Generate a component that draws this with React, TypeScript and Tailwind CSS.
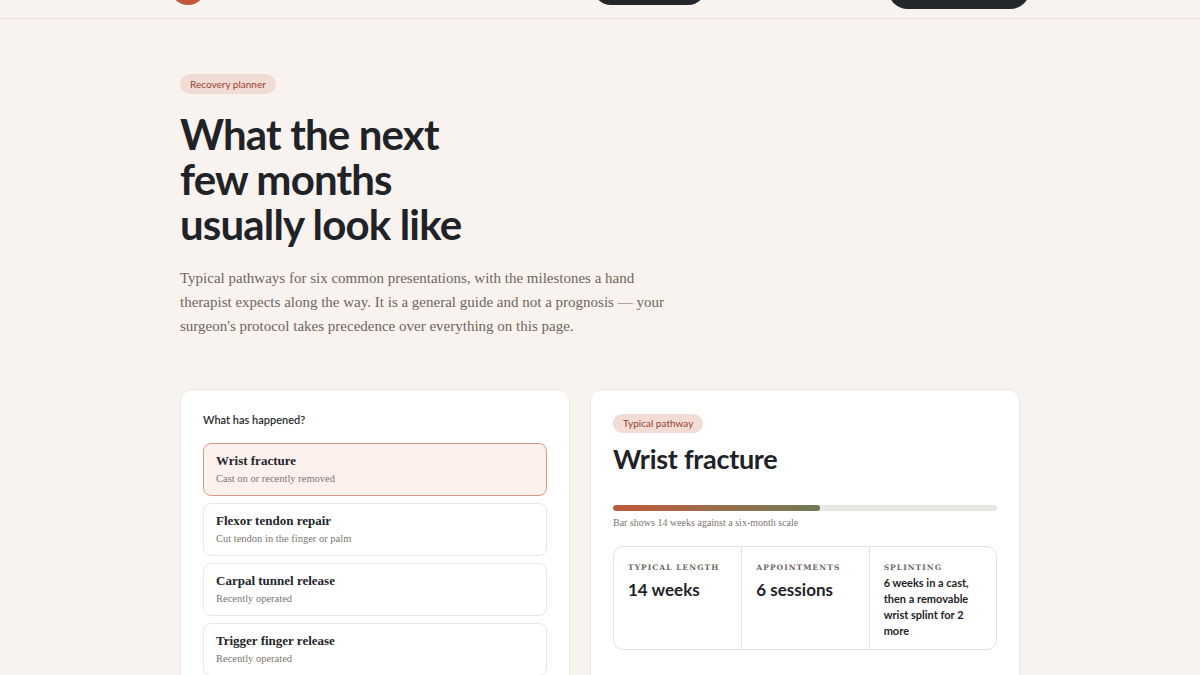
const OPTIONS = [
  { title: "Wrist fracture", sub: "Cast on or recently removed" },
  { title: "Flexor tendon repair", sub: "Cut tendon in the finger or palm" },
  { title: "Carpal tunnel release", sub: "Recently operated" },
  { title: "Trigger finger release", sub: "Recently operated" },
  { title: "Mallet finger", sub: "Splinted, not operated" },
  { title: "Thumb base arthritis", sub: "Joint replacement or fusion" },
];

const MILESTONES = [
  { week: "Week 1", text: "Swelling control and finger movement while the cast is on" },
  { week: "Week 6", text: "Cast removed, splint fitted, gentle wrist movement begins" },
  { week: "Week 10", text: "Strengthening and return to light daily tasks" },
];

const sans = "font-['Lato',sans-serif]";
const serif = "font-['Liberation_Serif',serif]";
const label = "font-['DejaVu_Serif',serif]";

export default function App() {
  const selected = 0;
  const weeks = 14;

  return (
    <div className="min-h-screen bg-[#f8f3ee] text-[#1f2328] overflow-hidden">
      <div className="-mt-[45px]">
        {/* Header */}
        <header className="h-16 border-b border-[#e6dfd8]">
          <div className="mx-auto w-[860px] h-full flex items-center">
            <div className="w-[423px] flex items-center gap-2.5">
              <div className="w-9 h-9 rounded-full bg-[#c4563a]" />
              <div className="leading-tight">
                <p className={`${sans} text-[14px] font-bold`}>Hand Therapy Cambridge</p>
                <p className={`${serif} text-[11px] text-[#7a716b]`}>
                  Cambridge · HCPC registered
                </p>
              </div>
            </div>
            <a className={`${sans} w-[113px] h-9 rounded-full bg-[#23262b] text-white text-[12px] font-semibold flex items-center justify-center`}>
              Planner
            </a>
            <nav className={`${sans} flex-1 flex items-center gap-6 pl-6 text-[12px] text-[#5b534e]`}>
              <a>Exercises</a>
              <a>Clinic</a>
            </nav>
            <a className={`${sans} w-[142px] h-10 mt-1 rounded-full bg-[#23262b] text-white text-[12px] font-semibold flex items-center justify-center`}>
              Book an assessment
            </a>
          </div>
        </header>

        {/* Main */}
        <main className="mx-auto w-[840px] pt-[55px] pb-16">
          <span className={`${sans} flex w-fit items-center h-5 px-2.5 rounded-full bg-[#f1ddd6] text-[#9a3f2b] text-[10px]`}>
            Recovery planner
          </span>
          <h1 className={`${sans} mt-[18px] text-[42px] leading-[45px] font-bold tracking-[-0.02em] text-[#1f2328]`}>
            What the next
            <br />
            few months
            <br />
            usually look like
          </h1>
          <p className={`${serif} mt-[19px] w-[490px] text-[15px] leading-6 text-[#6e6661]`}>
            Typical pathways for six common presentations, with the milestones a hand therapist
            expects along the way. It is a general guide and not a prognosis — your surgeon's
            protocol takes precedence over everything on this page.
          </p>

          <div className="mt-[51px] grid grid-cols-[390px_1fr] gap-5 items-start">
            {/* Left card */}
            <section className="bg-white rounded-xl border border-[#ede7e1] px-[22px] pt-[22px] pb-6">
              <p className={`${sans} text-[11px] font-semibold text-[#2a2d31]`}>What has happened?</p>
              <div className="mt-[14px] flex flex-col gap-[7px]">
                {OPTIONS.map((o, i) => (
                  <button
                    key={o.title}
                    className={`text-left h-[53px] rounded-lg border px-3 flex flex-col justify-center ${
                      i === selected
                        ? "bg-[#fdf1ee] border-[#d89a86]"
                        : "bg-white border-[#ebe6e1]"
                    }`}
                  >
                    <span className={`${serif} text-[13px] font-bold text-[#23262b] leading-4`}>{o.title}</span>
                    <span className={`${serif} mt-1 text-[10.5px] text-[#7d7570] leading-3`}>{o.sub}</span>
                  </button>
                ))}
              </div>
            </section>

            {/* Right card */}
            <section className="bg-white rounded-xl border border-[#ede7e1] px-[22px] pt-6 pb-6">
              <span className={`${sans} flex w-fit items-center h-[19px] px-2.5 rounded-full bg-[#f1ddd6] text-[#9a3f2b] text-[10px]`}>
                Typical pathway
              </span>
              <h2 className={`${sans} mt-2 text-[27px] leading-9 font-bold tracking-[-0.01em]`}>Wrist fracture</h2>

              <div className="mt-7 h-1.5 rounded-full bg-[#e9e7e4] overflow-hidden">
                <div
                  className="h-full rounded-full bg-gradient-to-r from-[#c0573a] to-[#6c7b56]"
                  style={{ width: `${(weeks / 26) * 100}%` }}
                />
              </div>
              <p className={`${serif} mt-1 text-[10px] text-[#7d7570]`}>
                Bar shows {weeks} weeks against a six-month scale
              </p>

              <div className="mt-[16px] grid grid-cols-3 border border-[#e6e1dc] rounded-[10px] h-[104px]">
                <div className="px-[14px] pt-[15px]">
                  <p className={`${label} text-[7.5px] font-bold tracking-[0.14em] text-[#6e6661]`}>TYPICAL LENGTH</p>
                  <p className={`${sans} mt-1 text-[17px] font-bold`}>14 weeks</p>
                </div>
                <div className="px-[14px] pt-[15px] border-l border-[#e6e1dc]">
                  <p className={`${label} text-[7.5px] font-bold tracking-[0.14em] text-[#6e6661]`}>APPOINTMENTS</p>
                  <p className={`${sans} mt-1 text-[17px] font-bold`}>6 sessions</p>
                </div>
                <div className="px-[14px] pt-[15px] border-l border-[#e6e1dc]">
                  <p className={`${label} text-[7.5px] font-bold tracking-[0.14em] text-[#6e6661]`}>SPLINTING</p>
                  <p className={`${sans} mt-0.5 text-[11px] leading-4 font-bold`}>
                    6 weeks in a cast, then a removable wrist splint for 2 more
                  </p>
                </div>
              </div>

              {/* Milestones */}
              <div className="mt-8">
                <p className={`${label} text-[7.5px] font-bold tracking-[0.14em] text-[#6e6661]`}>MILESTONES</p>
                <ol className="mt-3 flex flex-col gap-3">
                  {MILESTONES.map((m) => (
                    <li key={m.week} className="flex gap-3">
                      <span className={`${sans} w-14 shrink-0 text-[11px] font-bold`}>{m.week}</span>
                      <span className={`${serif} text-[12px] text-[#6e6661]`}>{m.text}</span>
                    </li>
                  ))}
                </ol>
              </div>
            </section>
          </div>
        </main>
      </div>
    </div>
  );
}
